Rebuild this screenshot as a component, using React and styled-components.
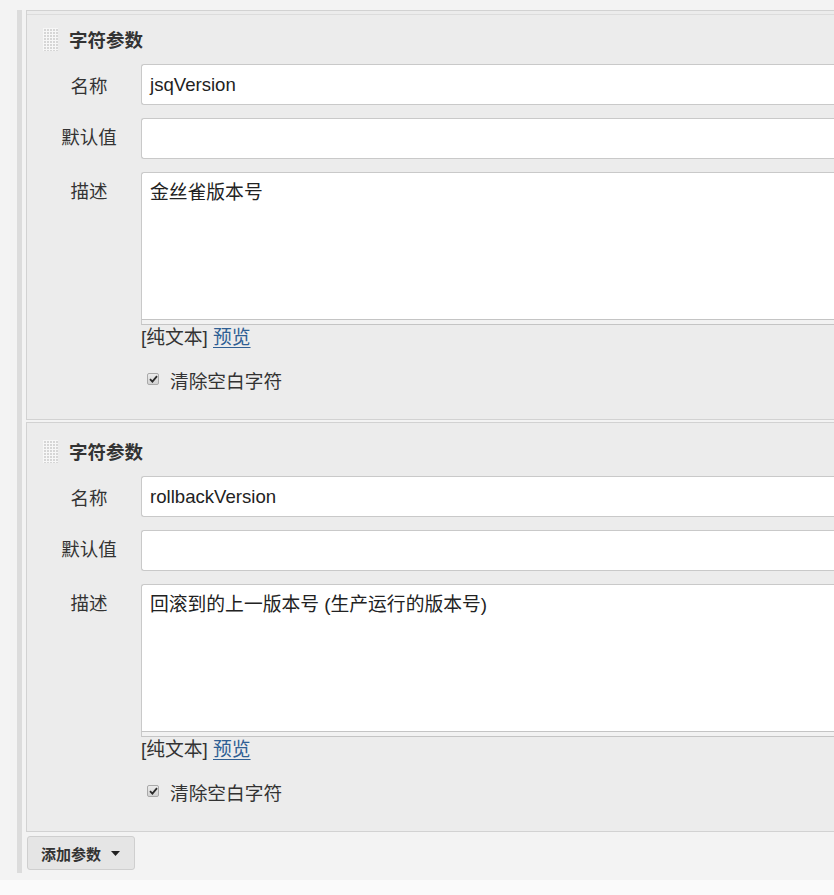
import React from "react";
import styled, {createGlobalStyle} from "styled-components";

const PARAMS = [
    {name: "jsqVersion", desc: "金丝雀版本号"},
    {name: "rollbackVersion", desc: "回滚到的上一版本号 (生产运行的版本号)"},
];

const GlobalStyle = createGlobalStyle`
  html, body {
    margin: 0;
    padding: 0;
    background: #fafafa;
    overflow: hidden;
  }
  body {
    font-family: "Liberation Sans", "Noto Sans CJK SC", sans-serif;
    color: #333;
  }
`;

const Page = styled.div`
  width: 940px;
  background: #f3f3f3;
  padding: 10px 0 7px 17px;
`;

const Rail = styled.div`
  border-left: 5px solid #dcdcdc;
  padding: 0 0 3px 4px;
`;

const Chunk = styled.div`
  position: relative;
  background: #ececec;
  border: 1px solid #d2d2d2;
  border-right: none;
  padding: 16px 0 28px 16px;

  & + & {
    margin-top: 2px;
  }

  &:first-child::before {
    content: "";
    position: absolute;
    left: 0;
    right: 0;
    top: 3px;
    height: 1px;
    background: #dcdcdc;
  }
`;

const Header = styled.div`
  display: flex;
  align-items: center;
  gap: 11px;
  height: 24px;
  margin-bottom: 13px;
`;

const Handle = styled.div`
  width: 15px;
  height: 23px;
  background-color: #d6d6d6;
  background-image: linear-gradient(90deg, #f7f7f7 1px, transparent 1px),
    linear-gradient(#f7f7f7 1px, transparent 1px);
  background-size: 3px 3px;
`;

const Title = styled.div`
  font-family: "Noto Sans CJK SC", sans-serif;
  font-weight: bold;
  font-size: 18.5px;
  color: #333;
`;

const Row = styled.div`
  display: grid;
  grid-template-columns: 98px 1fr;
  align-items: ${(p) => (p.top ? "start" : "center")};
  & + & {
    margin-top: 13px;
  }
`;

const Label = styled.label`
  width: 60px;
  margin-left: 16px;
  text-align: center;
  white-space: nowrap;
  padding-top: ${(p) => (p.top ? "5px" : "0")};
  margin-top: ${(p) => (p.lift ? "-6px" : "0")};
  font-family: "Noto Sans CJK SC", sans-serif;
  font-size: 18.5px;
  color: #333;
`;

const Input = styled.div`
  height: 41px;
  box-sizing: border-box;
  background: #fff;
  border: 1px solid #c9c9c9;
  border-right: none;
  border-radius: 3px 0 0 3px;
  padding: 0 8px;
  display: flex;
  align-items: center;
  font-size: 18.6px;
  color: #222;
`;

const TextArea = styled.div`
  height: 147px;
  box-sizing: border-box;
  background: #fff;
  border: 1px solid #c9c9c9;
  border-right: none;
  border-bottom: none;
  border-radius: 3px 0 0 0;
  padding: 8px 8px;
  font-size: 18.8px;
  line-height: 24px;
  color: #222;
`;

const Grip = styled.div`
  height: 6px;
  box-sizing: border-box;
  border-top: 1px solid #c4c4c4;
  border-bottom: 1px solid #c4c4c4;
  border-left: 1px solid #c9c9c9;
  background: #f2f2f2;
`;

const Links = styled.div`
  margin-top: 1px;
  font-size: 18.8px;
  line-height: 24px;
  color: #333;
  a {
    color: #2f5f94;
    text-decoration: underline;
    text-underline-offset: 3px;
  }
`;

const CheckRow = styled.div`
  display: flex;
  align-items: center;
  gap: 11px;
  height: 24px;
  margin-top: 17px;
  padding-left: 6px;
  font-family: "Noto Sans CJK SC", sans-serif;
  font-size: 18.7px;
  color: #333;
`;

const Box = styled.span`
  width: 12px;
  height: 12px;
  box-sizing: border-box;
  border: 1px solid #a9a9a9;
  border-radius: 2px;
  background: linear-gradient(#ececec, #d2d2d2);
  display: flex;
  align-items: center;
  justify-content: center;
`;

const AddButton = styled.button`
  margin: 4px 0 0 1px;
  height: 34px;
  box-sizing: border-box;
  display: inline-flex;
  align-items: center;
  gap: 10px;
  padding: 0 14px 0 13px;
  background: #e5e5e5;
  border: 1px solid #cfcfcf;
  border-radius: 3px;
  font-family: "Noto Sans CJK SC", sans-serif;
  font-weight: bold;
  font-size: 15px;
  color: #333;
`;

const Check = () => (
    <Box>
        <svg width="9" height="8" viewBox="0 0 9 8">
            <path d="M1 4.2 L3.4 6.6 L8 1.2" fill="none" stroke="#2b2b2b" strokeWidth="1.8"/>
        </svg>
    </Box>
);

const ParamChunk = ({param}) => (
    <Chunk>
        <Header>
            <Handle/>
            <Title>字符参数</Title>
        </Header>
        <Row>
            <Label>名称</Label>
            <Input>{param.name}</Input>
        </Row>
        <Row>
            <Label lift>默认值</Label>
            <Input/>
        </Row>
        <Row top>
            <Label top>描述</Label>
            <div>
                <TextArea>{param.desc}</TextArea>
                <Grip/>
                <Links>
                    [纯文本] <a>预览</a>
                </Links>
                <CheckRow>
                    <Check/>
                    清除空白字符
                </CheckRow>
            </div>
        </Row>
    </Chunk>
);

const App = () => (
    <>
        <GlobalStyle/>
        <Page>
            <Rail>
                {PARAMS.map((param) => (
                    <ParamChunk key={param.name} param={param}/>
                ))}
                <AddButton>
                    添加参数
                    <svg width="9" height="5" viewBox="0 0 9 5">
                        <path d="M0 0 H9 L4.5 5 Z" fill="#222"/>
                    </svg>
                </AddButton>
            </Rail>
        </Page>
    </>
);

export default App;
